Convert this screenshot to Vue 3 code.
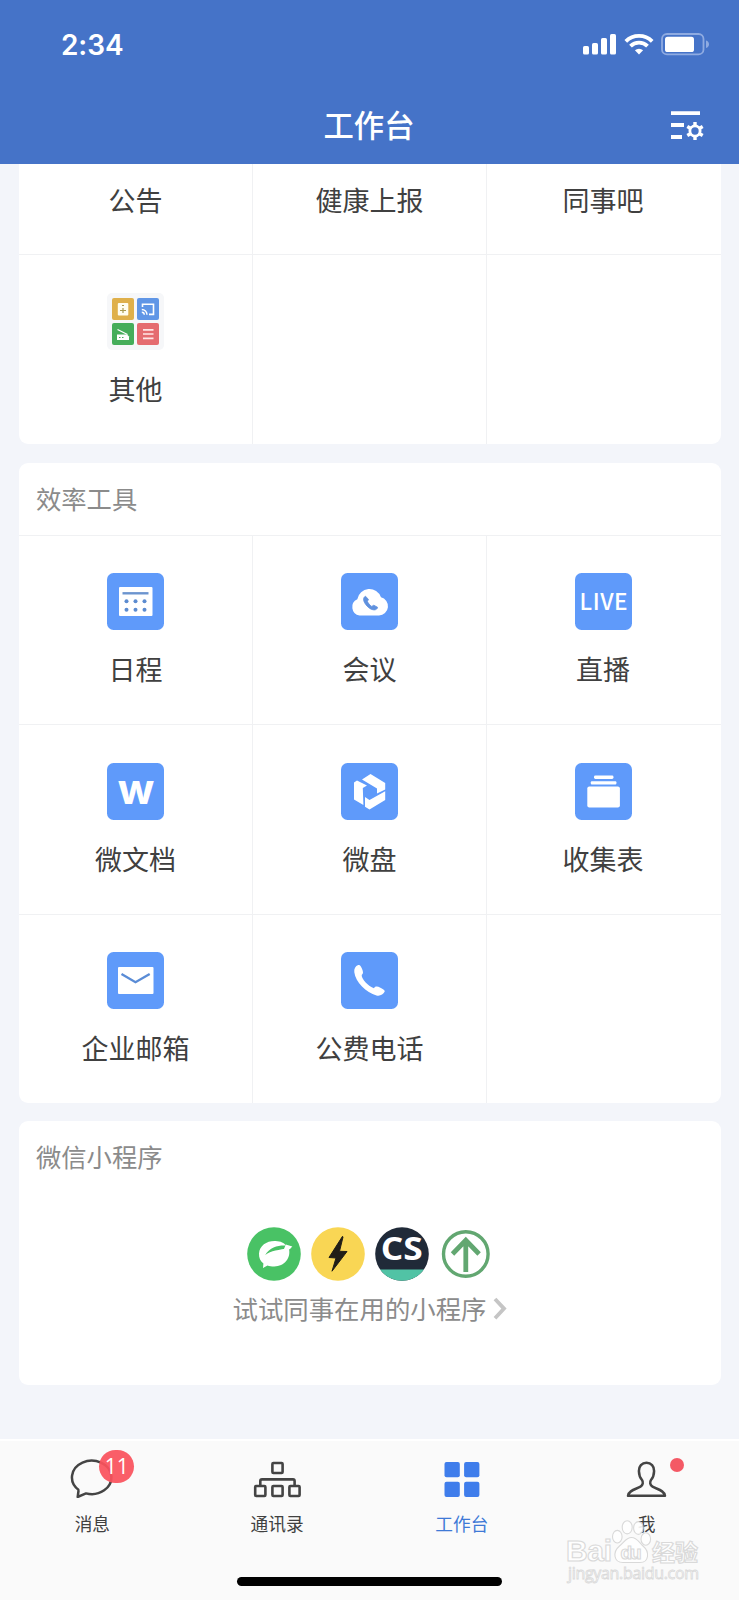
<template>
  <div class="phone">
    <header class="header">
      <div class="status">
        <span class="time">2:34</span>
        <svg class="status-icons" width="128" height="24" viewBox="582 32 128 24">
          <g fill="#fff">
            <rect x="583" y="46" width="6" height="8.6" rx="1.6" />
            <rect x="592" y="43" width="6" height="11.6" rx="1.6" />
            <rect x="601" y="38" width="6" height="16.6" rx="1.6" />
            <rect x="610" y="34" width="6" height="20.6" rx="1.6" />
            <path d="M639 54.4L634.9 50.3A6 6 0 0 1 643.1 50.3Z" />
          </g>
          <g fill="none" stroke="#fff" stroke-width="3.8">
            <path d="M625.8 41.3A18.8 18.8 0 0 1 652.2 41.3" />
            <path d="M630.5 46.2A12 12 0 0 1 647.5 46.2" />
          </g>
          <rect x="662" y="34" width="41.5" height="20.4" rx="5" fill="none" stroke="#8fabe1" stroke-width="1.8" />
          <rect x="665" y="36.7" width="29" height="15.4" rx="2.6" fill="#fff" />
          <path d="M706 40.5Q709 41.5 709 44.2Q709 47 706 48Z" fill="#8fabe1" />
        </svg>
      </div>
      <div class="title-bar">
        <h1>工作台</h1>
        <svg class="setting" width="34" height="30" viewBox="670 109 34 30">
          <path d="M671 112.2H700M671 124H684M671 136H682" stroke="#fff" stroke-width="3.8" fill="none" />
          <g fill="none" stroke="#fff">
            <circle cx="695" cy="130" r="5.1" stroke-width="2.8" />
            <path
              d="M695 124.7V121.1M695 135.3V138.9M699.6 127.3L702.7 125.5M690.4 132.7L687.3 134.5M690.4 127.3L687.3 125.5M699.6 132.7L702.7 134.5"
              stroke-width="3.4"
            />
          </g>
        </svg>
      </div>
    </header>

    <main class="content">
      <section class="card first">
        <div class="grid names">
          <div v-for="name in topNames" :key="name" class="cell">
            <span class="label">{{ name }}</span>
          </div>
        </div>
        <div class="grid">
          <div class="cell">
            <svg class="icon" viewBox="0 0 57 57">
              <rect width="57" height="57" rx="5" fill="#f6f7f9" />
              <rect x="5" y="5" width="22" height="22" rx="2" fill="#dfb04b" />
              <rect x="30" y="5" width="22" height="22" rx="2" fill="#6096e6" />
              <rect x="5" y="30" width="22" height="22" rx="2" fill="#45ad5a" />
              <rect x="30" y="30" width="22" height="22" rx="2" fill="#e56c70" />
              <rect x="10.8" y="10" width="10.5" height="12.5" rx="1" fill="#fffdf0" />
              <path d="M13 17.5H19M16 15V20M15 12.5H17" stroke="#a99a50" stroke-width="1.2" />
              <path d="M35.5 14V11.2H46.5V21.4H42" fill="none" stroke="#fff" stroke-width="1.6" />
              <path d="M34.8 16.5A5.2 5.2 0 0 1 40 21.8M34.8 19.3A2.6 2.6 0 0 1 37.3 21.8" fill="none" stroke="#fff" stroke-width="1.4" />
              <path d="M10 41.5H20L22 43.5V47H10Z" fill="#fff" />
              <path d="M10.5 36.5L20.5 41.5" stroke="#fff" stroke-width="1.3" />
              <path d="M12 44.5H13.5M15 44.5H16.5" stroke="#45ad5a" stroke-width="1.2" />
              <path d="M36 36.8H46.5M36 41H46.5M36 45.3H46.5" stroke="#ffe6e6" stroke-width="1.7" />
            </svg>
            <span class="label">其他</span>
          </div>
          <div class="cell"></div>
          <div class="cell"></div>
        </div>
      </section>

      <section class="card">
        <h2>效率工具</h2>
        <div class="grid tools">
          <div v-for="tool in tools" :key="tool.icon" class="cell">
            <svg v-if="tool.name" class="icon" viewBox="0 0 57 57">
              <rect width="57" height="57" rx="6.5" fill="#5f9afa" />
              <g v-if="tool.icon === 'calendar'">
                <rect x="12" y="14" width="33.5" height="29" rx="1" fill="#fff" />
                <path d="M15.5 20.3H41.5" stroke="#6b94cf" stroke-width="2.4" />
                <g fill="#5b8bd0">
                  <circle v-for="n in 6" :key="n" :cx="19.5 + ((n - 1) % 3) * 9" :cy="n > 3 ? 36.7 : 28.2" r="2" />
                </g>
              </g>
              <g v-else-if="tool.icon === 'meeting'">
                <path d="M18.5 42.5A8.6 8.6 0 0 1 16.3 26.2A12.3 12.3 0 0 1 40 24.2A9.3 9.3 0 0 1 38 42.5Z" fill="#fff" />
                <path d="M24.5 23.2C22.2 24.2 22 27.3 24 30.4C26.2 34 30 37 33.5 36.9C35.2 36.8 36.5 35.6 36.6 34.3L32.8 32.2L30.7 33.4C28.8 32.2 27.2 30.3 26.4 28.3L27.5 26.5Z" fill="#5f91de" stroke="#5f91de" stroke-width="0.8" />
              </g>
              <text v-else-if="tool.icon === 'live'" class="live" x="4.6" y="37" textLength="48" lengthAdjust="spacing">LIVE</text>
              <text v-else-if="tool.icon === 'doc'" class="doc" x="10.4" y="41" textLength="37" lengthAdjust="spacingAndGlyphs">W</text>
              <g v-else-if="tool.icon === 'drive'" fill="#fff">
                <path d="M21 16.6L29.5 11L44.2 20V26.4L36 30.5V25.6Z" />
                <path d="M13 19.5L16 17.5L26 22.4L21.8 25L22.4 42L13 36.5Z" />
                <path d="M24 34L28.5 37L44.2 28.2V37L28.5 46.5L24 43.8Z" />
              </g>
              <g v-else-if="tool.icon === 'form'" fill="#fff">
                <rect x="19" y="12.6" width="19.5" height="3.4" rx="1.4" />
                <rect x="15.8" y="18.2" width="25.6" height="3.2" rx="1" />
                <rect x="12.3" y="23.6" width="32.6" height="21" rx="2" />
              </g>
              <g v-else-if="tool.icon === 'mail'">
                <rect x="11" y="15" width="35.5" height="27" rx="1" fill="#fff" />
                <path d="M14.5 22L28.5 30.2L42.7 22" fill="none" stroke="#5a8cd6" stroke-width="2.4" />
              </g>
              <path
                v-else
                d="M17.2 13.1C19 12.4 20.2 14.8 21 16.8C22.2 19.8 22.6 21.6 20.7 23C20.4 27 27.5 34.6 33 36.2C34.6 33.9 36.5 34.4 39.4 35.7C41.9 36.8 44.4 38.3 43.6 39.8C42.3 42.6 38.8 44.3 35.5 43.4C25.2 40.8 14.6 30.2 13.3 20.3C12.9 16.9 14.4 14.2 17.2 13.1Z"
                fill="#fff"
              />
            </svg>
            <span class="label">{{ tool.name }}</span>
          </div>
        </div>
      </section>

      <section class="card mini">
        <h2>微信小程序</h2>
        <div class="mini-icons">
          <svg width="54" height="54" viewBox="0 0 54 54">
            <circle cx="27" cy="27" r="26.8" fill="#49c265" />
            <path d="M12 26.5C12.5 18.5 20 13.6 28.5 14C34 14.2 37 16 39.2 18.6C32 18 23 20 18.2 28C24 23.5 32 22.8 41.8 21.2C44.5 31 37 39.6 27 39.4C24.5 39.4 22.5 39 20.5 38.4L16 41L16.4 36.5C13.3 34.3 11.8 30.8 12 26.5Z" fill="#fff" />
            <path d="M38.8 17.4L45.3 19.6L42.8 22.3L37 22Z" fill="#fff" />
          </svg>
          <svg width="54" height="54" viewBox="0 0 54 54">
            <circle cx="27" cy="27" r="26.8" fill="#f9d654" />
            <path d="M31.5 9.3L18 30.5L25 31L21 44.2L36 24.5L28.5 24.3L32 10Z" fill="#211e17" stroke="#211e17" stroke-linejoin="round" />
          </svg>
          <svg width="54" height="54" viewBox="0 0 54 54">
            <circle cx="27" cy="27" r="26.8" fill="#202a38" />
            <path d="M5.2 42.6H48.8A26.8 26.8 0 0 1 5.2 42.6Z" fill="#51c3a5" />
            <text class="cs" x="5.8" y="33" textLength="42" lengthAdjust="spacingAndGlyphs">CS</text>
          </svg>
          <svg width="54" height="54" viewBox="0 0 54 54">
            <g fill="none" stroke="#62a771">
              <circle cx="26.8" cy="27" r="22.3" stroke-width="3.4" />
              <path d="M26.8 45V12.5M13.5 27L26.8 13.3L40.1 27" stroke-width="4.8" />
            </g>
          </svg>
        </div>
        <div class="mini-link">
          <span>试试同事在用的小程序</span>
          <svg width="14" height="24" viewBox="0 0 14 24">
            <path d="M2 3L11 12.6L2 22.2" fill="none" stroke="#c5c5c5" stroke-width="3.8" />
          </svg>
        </div>
      </section>
    </main>

    <nav class="tabbar">
      <div class="tab">
        <div class="tab-icon">
          <svg width="48" height="40" viewBox="69 1458 48 40">
            <path d="M80 1490.2A19.7 16.7 0 1 1 87 1493.4L78.7 1497L79.6 1490" fill="none" stroke="#444" stroke-width="2.5" stroke-linejoin="round" />
          </svg>
          <span class="badge">11</span>
        </div>
        <span>消息</span>
      </div>
      <div class="tab">
        <div class="tab-icon">
          <svg width="48" height="40" viewBox="253 1458 48 40">
            <g fill="none" stroke="#444" stroke-width="2.6">
              <rect x="272.4" y="1463" width="10.2" height="10" rx="1" />
              <rect x="255.2" y="1486" width="10.2" height="10" rx="1" />
              <rect x="272.4" y="1486" width="10.2" height="10" rx="1" />
              <rect x="289.4" y="1486" width="10.2" height="10" rx="1" />
              <path d="M260.3 1486V1481Q260.3 1479.4 262 1479.4H293Q294.6 1479.4 294.6 1481V1486" />
            </g>
          </svg>
        </div>
        <span>通讯录</span>
      </div>
      <div class="tab active">
        <div class="tab-icon">
          <svg width="48" height="40" viewBox="438.5 1458 48 40">
            <g fill="#3f7deb">
              <rect x="445" y="1462" width="15.3" height="15.3" rx="2" />
              <rect x="464.6" y="1462" width="15.3" height="15.3" rx="2" />
              <rect x="445" y="1481.7" width="15.3" height="15.3" rx="2" />
              <rect x="464.6" y="1481.7" width="15.3" height="15.3" rx="2" />
            </g>
          </svg>
        </div>
        <span>工作台</span>
      </div>
      <div class="tab">
        <div class="tab-icon">
          <svg width="48" height="40" viewBox="623 1458 48 40">
            <path
              d="M646.5 1462.8C641.8 1462.8 638.8 1466.3 638.9 1471C639 1475.2 640.2 1478 642 1480C643.5 1482 643 1485.3 640.5 1486.7C636 1489.2 628.5 1490.3 628 1495.8H665C664.5 1490.3 657 1489.2 652.5 1486.7C650 1485.3 649.5 1482 651 1480C652.8 1478 654 1475.2 654.1 1471C654.2 1466.3 651.2 1462.8 646.5 1462.8Z"
              fill="none" stroke="#444" stroke-width="2.5" stroke-linejoin="round"
            />
          </svg>
          <i class="dot"></i>
        </div>
        <span>我</span>
      </div>
      <div class="home-bar"></div>
    </nav>

    <svg class="watermark" width="150" height="70" viewBox="560 1515 150 70">
      <g fill="#fff" stroke="#d6d6d6" stroke-width="1.1">
        <ellipse cx="617.3" cy="1536.7" rx="4.8" ry="6.3" />
        <ellipse cx="627.2" cy="1527.3" rx="5" ry="6.6" />
        <ellipse cx="638.4" cy="1528" rx="4.8" ry="6.4" />
        <ellipse cx="645.8" cy="1539" rx="4.8" ry="6.2" />
        <path d="M631.5 1537.5C637 1537.5 639 1542.5 643 1546C650 1552 649 1562.5 640 1562.5H623C613.5 1562.5 612.5 1552 619.5 1546C624 1542.5 626 1537.5 631.5 1537.5Z" />
        <text class="bai" x="566" y="1561" textLength="46">Bai</text>
        <text class="du" x="620.5" y="1559" textLength="21">du</text>
        <text class="jy" x="652" y="1560.5" textLength="46">经验</text>
        <text class="url" x="568" y="1578.5" textLength="131">jingyan.baidu.com</text>
      </g>
    </svg>
  </div>
</template>

<script setup>
const topNames = ['公告', '健康上报', '同事吧']

const tools = [
  { icon: 'calendar', name: '日程' },
  { icon: 'meeting', name: '会议' },
  { icon: 'live', name: '直播' },
  { icon: 'doc', name: '微文档' },
  { icon: 'drive', name: '微盘' },
  { icon: 'form', name: '收集表' },
  { icon: 'mail', name: '企业邮箱' },
  { icon: 'phone', name: '公费电话' },
  { icon: 'empty', name: '' }
]
</script>

<style>
body {
  margin: 0;
  background: #f3f5fa;
}
</style>

<style scoped>
* {
  box-sizing: border-box;
}

.phone {
  position: relative;
  display: flex;
  flex-direction: column;
  width: 739px;
  height: 1600px;
  overflow: hidden;
  background: #f3f5fa;
  color: #404040;
  font-family: "Noto Sans CJK SC", "Liberation Sans", sans-serif;
}

svg {
  display: block;
}

/* Header */
.header {
  height: 164px;
  background: #4573c8;
  color: #fff;
}

.status {
  display: flex;
  justify-content: space-between;
  align-items: center;
  height: 88px;
  padding: 0 29px 0 61px;
}

.time {
  padding-top: 2px;
  font-family: Inter, sans-serif;
  font-size: 28px;
  font-weight: 600;
  letter-spacing: -0.1px;
}

.title-bar {
  display: flex;
  justify-content: space-between;
  align-items: center;
  height: 72px;
  padding: 0 35px 0 68px;
}

h1 {
  flex: 1;
  margin: 0;
  text-align: center;
  font-size: 30.3px;
  font-weight: 500;
  line-height: 67px;
}

.setting {
  margin-top: 1px;
}

/* Cards */
.content {
  display: flex;
  flex-direction: column;
  gap: 18px;
  height: 1275px;
  padding: 0 18px 0 19px;
}

.card {
  background: #fff;
  border-radius: 9px;
  overflow: hidden;
}

.first {
  margin-bottom: 1px;
  border-radius: 0 0 9px 9px;
}

h2 {
  height: 72px;
  margin: 0;
  padding-left: 17px;
  color: #8b8b8b;
  font-size: 25.3px;
  font-weight: 400;
  line-height: 70px;
}

.grid {
  display: grid;
  grid-template-columns: repeat(3, 1fr);
  grid-auto-rows: 189.4px;
}

.names {
  grid-auto-rows: 90.4px;
}

.cell {
  display: flex;
  flex-direction: column;
  align-items: center;
  padding-top: 37.4px;
  border-top: 1px solid #f0f1f3;
  border-right: 1px solid #f0f1f3;
}

.cell:nth-child(3n) {
  padding-right: 2px;
  border-right: none;
}

.names .cell {
  padding-top: 16px;
  border-top: none;
}

.icon {
  width: 57px;
  height: 57px;
}

.label {
  font-size: 27px;
  line-height: 40px;
}

.icon + .label {
  margin-top: 19px;
}

.live {
  fill: #fff;
  font-family: "Noto Sans CJK SC", sans-serif;
  font-size: 22.5px;
  font-weight: 500;
}

.doc {
  fill: #fff;
  font-family: Inter, sans-serif;
  font-size: 31.5px;
  font-weight: 800;
}

/* Mini programs */
.mini {
  height: 264.5px;
}

.mini-icons {
  display: flex;
  justify-content: center;
  gap: 10.2px;
  margin-top: 34px;
}

.cs {
  fill: #fff;
  font-family: "Open Sans", sans-serif;
  font-size: 33px;
  font-weight: 700;
}

.mini-link {
  display: flex;
  justify-content: center;
  align-items: center;
  gap: 7px;
  margin-top: 7px;
  color: #8b8b8b;
  font-size: 25.4px;
  line-height: 40px;
}

/* Tab bar */
.tabbar {
  position: relative;
  display: flex;
  flex: 1;
  background: #fafafa;
  border-top: 2px solid #fff;
}

.tab {
  display: flex;
  flex: 1;
  flex-direction: column;
  align-items: center;
  padding-top: 17px;
  font-size: 17.7px;
  line-height: 26px;
}

.tab-icon {
  position: relative;
  margin-bottom: 12px;
}

.active {
  color: #3e79d6;
}

.badge {
  position: absolute;
  top: -8px;
  left: 31px;
  width: 35px;
  height: 33px;
  border-radius: 17px;
  background: rgba(250, 82, 92, 0.93);
  color: #fff;
  font-family: "Open Sans", sans-serif;
  font-size: 21px;
  line-height: 33px;
  text-align: center;
}

.dot {
  position: absolute;
  top: 0;
  left: 47px;
  width: 14px;
  height: 14px;
  border-radius: 50%;
  background: #f45965;
}

.home-bar {
  position: absolute;
  bottom: 14px;
  left: 237px;
  width: 265px;
  height: 9px;
  border-radius: 5px;
  background: #000;
}

/* Watermark */
.watermark {
  position: absolute;
  left: 560px;
  top: 1515px;
  opacity: 0.9;
}

.bai,
.du {
  font-family: "Liberation Sans", sans-serif;
  font-size: 30px;
  font-weight: 700;
}

.du {
  font-size: 19px;
}

.jy {
  font-size: 23px;
  font-weight: 700;
}

.url {
  font-family: "Open Sans", sans-serif;
  font-size: 16px;
  stroke-width: 0.8;
}
</style>
